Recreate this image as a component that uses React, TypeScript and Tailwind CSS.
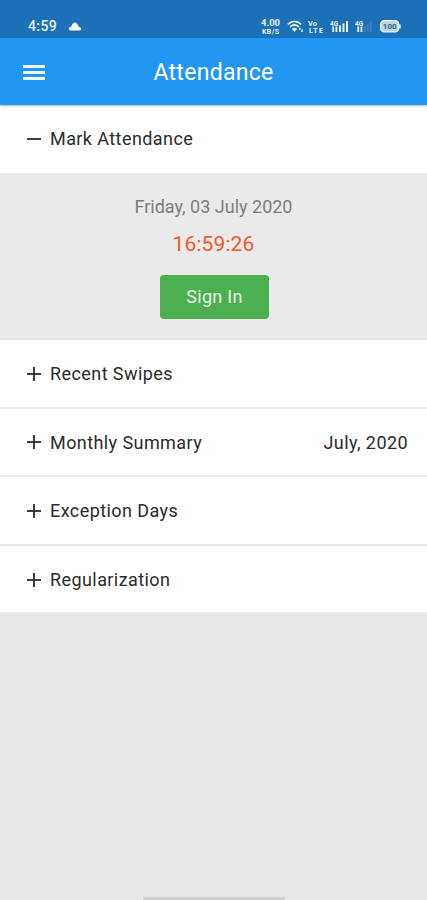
import { useState } from "react";

const sections = [
  { title: "Recent Swipes", detail: "" },
  { title: "Monthly Summary", detail: "July, 2020" },
  { title: "Exception Days", detail: "" },
  { title: "Regularization", detail: "" },
];

function ToggleIcon({ open }: { open: boolean }) {
  return (
    <svg width="16" height="16" viewBox="0 0 16 16" stroke="#2b2b2b" strokeWidth="1.8" fill="none">
      <path d="M1 8h14" />
      {!open && <path d="M8 1v14" />}
    </svg>
  );
}

function StatusBar() {
  return (
    <div className="flex h-[38px] items-start bg-[#1b70b7] pl-7 pr-[26px] pt-[17px] text-[#e8f3fc]">
      <span className="w-[40px] text-[14px] font-medium leading-[19px] tracking-[0.4px]">4:59</span>
      <svg className="mt-[5px]" width="14" height="9" viewBox="0 0 13 9" fill="#fff">
        <path d="M2.2 8.5Q0 8.2.2 6.7.5 5 2.7 4.8 4.2.4 6.8.5 9 .9 10 4.4 12.8 5 12.8 6.8 12.8 8.5 11 8.5Z" />
      </svg>
      <div className="ml-auto flex items-start">
        <svg width="20" height="18" viewBox="0 0 20 18" fill="currentColor">
          <text x="0" y="9" fontSize="9.5" fontWeight="700" textLength="19">4.00</text>
          <text x="1" y="16.5" fontSize="7" fontWeight="700" textLength="17">KB/S</text>
        </svg>
        <svg className="ml-[6px] mt-[3px]" width="17" height="13" viewBox="0 0 17 13" fill="none" stroke="currentColor" strokeWidth="1.6">
          <path d="M.8 4.3Q7.5-1.7 14.2 4.3M3 6.8q4.5-3.8 9 0" />
          <path d="M5.2 9q2.3-2 4.6 0L7.5 11.5Z" fill="currentColor" strokeWidth=".6" />
          <path d="M12.8 7.7v2M15 9.5v2.5" strokeWidth="1.6" />
        </svg>
        <svg className="ml-[4px] mt-[2px]" width="17" height="16" viewBox="0 0 17 16" fill="currentColor">
          <text x="0" y="7" fontSize="7.5" fontWeight="700">Vo</text>
          <text x="1" y="14" fontSize="7" fontWeight="700" textLength="14">LTE</text>
        </svg>
        <svg className="ml-[5px] mt-[3px]" width="19" height="13" viewBox="0 0 19 13" fill="currentColor">
          <text x="0" y="5.5" fontSize="6.5" fontWeight="700">4G</text>
          <path d="M2.3 6.5h1.8V12H2.3zM5.5 6.5h1.8V12H5.5zM9 5.5h2V12H9zM12.5 3.5h2V12h-2zM16 1h2v11h-2z" />
        </svg>
        <svg className="ml-[6px] mt-[3px]" width="18" height="13" viewBox="0 0 18 13" fill="currentColor">
          <text x="0" y="5.5" fontSize="6.5" fontWeight="700">4G</text>
          <path d="M2.3 6.5h1.8V12H2.3zM5.5 6.5h1.8V12H5.5z" />
          <path d="M9 6h1.6v6H9zM12 3.5h1.6V12H12zM15 1h1.6v11H15z" opacity=".15" />
        </svg>
        <svg className="ml-[7px] mt-[3px]" width="21" height="13" viewBox="0 0 21 13">
          <rect x=".7" y=".7" width="18" height="11.2" rx="3.6" fill="#b9d5e6" stroke="currentColor" strokeWidth="1.3" />
          <path d="M19.9 4.4v4" stroke="currentColor" strokeWidth="1.6" />
          <text x="9.7" y="9.3" fontSize="8" fontWeight="700" textAnchor="middle" fill="#31647f">100</text>
        </svg>
      </div>
    </div>
  );
}

export default function App() {
  const [now] = useState({ date: "Friday, 03 July 2020", time: "16:59:26" });

  return (
    <div className="flex h-[900px] w-full flex-col bg-[#e7e7e7] font-['Roboto',sans-serif] text-[#2b2b2b]">
      <StatusBar />

      <header className="z-10 grid h-[67px] grid-cols-[1fr_auto_1fr] items-center bg-[#2196f3] px-[23px] pt-px shadow-[0_1px_2px_rgba(0,0,0,0.3)]">
        <button aria-label="Menu" className="flex w-[22px] flex-col gap-[3px]">
          <span className="h-[3px] w-full bg-[#eef7fe]" />
          <span className="h-[3px] w-full bg-[#eef7fe]" />
          <span className="h-[3px] w-full bg-[#eef7fe]" />
        </button>
        <h1 className="pt-px text-[23px] leading-[30px] tracking-[0.3px] text-white">Attendance</h1>
      </header>

      <button className="flex h-[67.5px] items-center gap-[8px] bg-white pl-[26px] text-[18px] tracking-[0.42px]">
        <ToggleIcon open />
        <span>Mark Attendance</span>
      </button>

      <div className="flex h-[167.5px] flex-col items-center border-b border-[#dedede] bg-[#eaeaea] pt-[22px]">
        <p className="text-[18px] leading-6 text-[#7d7d7d]">{now.date}</p>
        <p className="mt-[11px] text-[21px] leading-7 tracking-[0.1px] text-[#f4582b]">{now.time}</p>
        <button className="ml-[2px] mt-[17px] h-[44px] w-[109px] rounded-[4px] bg-[#4caf50] text-[18px] tracking-[0.3px] text-[#e8f8e6]">
          Sign In
        </button>
      </div>

      {sections.map((s) => (
        <button
          key={s.title}
          className="flex h-[68.6px] items-center gap-[8px] border-b-2 border-[#ebebeb] bg-white pl-[26px] pr-[19px] pt-px text-[18px] tracking-[0.42px]"
        >
          <ToggleIcon open={false} />
          <span>{s.title}</span>
          {s.detail && <span className="ml-auto">{s.detail}</span>}
        </button>
      ))}

      <div className="mx-auto mt-auto h-[3px] w-[142px] bg-[#d2d2d2]" />
    </div>
  );
}
